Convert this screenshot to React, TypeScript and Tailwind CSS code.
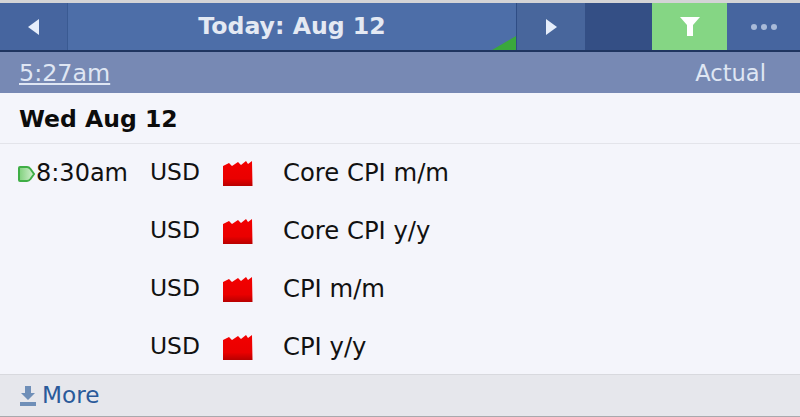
const font = { fontFamily: '"DejaVu Sans", Verdana, sans-serif' };

function Factory() {
  return (
    <svg width="30" height="26" viewBox="0 0 30 26" className="block">
      <defs>
        <linearGradient id="fac" x1="0" y1="0" x2="0" y2="1">
          <stop offset="0" stopColor="#f20000" />
          <stop offset="0.7" stopColor="#ea0000" />
          <stop offset="1" stopColor="#b80000" />
        </linearGradient>
      </defs>
      <path d="M0 6 L6 3 L9 6 L15 2 L18 5 L23 1 L25 4 L29 1 L29.5 26 L0 26 Z" fill="url(#fac)" />
    </svg>
  );
}

function Row({ time, name }: { time?: string; name: string }) {
  return (
    <div className="flex h-[58px] shrink-0 items-center text-[24px] text-[#111]">
      <div className="flex w-[150px] items-center pl-[18px]">
        {time && (
          <>
            <svg width="18" height="18" viewBox="0 0 18 18" className="mt-[2px] shrink-0">
              <defs>
                <linearGradient id="mark" x1="0" y1="0" x2="1" y2="0">
                  <stop offset="0" stopColor="#7fd07c" />
                  <stop offset="1" stopColor="#d5f0d2" />
                </linearGradient>
              </defs>
              <path d="M2 2 H9 Q11 2 12.5 4 L16 9 L12.5 14 Q11 16 9 16 H2 Q1 16 1 15 V3 Q1 2 2 2 Z" fill="url(#mark)" stroke="#3fae46" strokeWidth="2" />
            </svg>
            <span>{time}</span>
          </>
        )}
      </div>
      <div className="w-[73px] text-[23.4px]">USD</div>
      <div className="w-[60px]"><Factory /></div>
      <div className="text-[24.3px]">{name}</div>
    </div>
  );
}

export default function App() {
  return (
    <div className="flex h-[417px] w-[800px] flex-col overflow-hidden bg-[#f4f5fb]" style={font}>
      <div className="h-[3px] shrink-0 bg-[#d4d4d6]" />

      {/* nav bar */}
      <div className="flex h-[49px] shrink-0 border-b-2 border-[#1f3560] bg-[#4d6ea8]">
        <div className="flex w-[68px] items-center justify-center border-r border-[#3a5a92] bg-[#46659f]">
          <svg width="12" height="16" viewBox="0 0 12 16"><path d="M11 0 V16 L0 8 Z" fill="#e6eefb" /></svg>
        </div>
        <div className="relative flex flex-1 items-center justify-center text-[23.6px] font-bold text-[#e4e9f3]">
          Today: Aug 12
          <div className="absolute bottom-0 right-0 h-[14px] w-[24px] bg-[#3aa83c] [clip-path:polygon(100%_0,100%_100%,0_100%)]" />
        </div>
        <div className="flex w-[69px] items-center justify-center border-l border-[#2f4d85] bg-[#48669c]">
          <svg width="12" height="16" viewBox="0 0 12 16"><path d="M1 0 V16 L12 8 Z" fill="#e6eefb" /></svg>
        </div>
        <div className="w-[67px] bg-[#344f85]" />
        <div className="flex w-[75px] items-center justify-center bg-[#85d684]">
          <svg width="20" height="20" viewBox="0 0 20 20"><path d="M0 0 H20 L13 8 V19 H7 V8 Z" fill="#fff" /></svg>
        </div>
        <div className="flex w-[73px] items-center justify-center gap-[4px] bg-[#46659f]">
          <div className="h-[6px] w-[6px] rounded-full bg-[#a9bad8]" />
          <div className="h-[6px] w-[6px] rounded-full bg-[#a9bad8]" />
          <div className="h-[6px] w-[6px] rounded-full bg-[#a9bad8]" />
        </div>
      </div>

      {/* time bar */}
      <div className="flex h-[41px] shrink-0 items-center justify-between bg-[#7789b4] pl-[19px] pr-[34px] pt-[3px] text-[23.8px] text-[#dfe6f3]">
        <span className="underline underline-offset-2">5:27am</span>
        <span className="text-[22.6px]">Actual</span>
      </div>

      <div className="flex h-[51px] shrink-0 items-center border-b border-[#e3e4ea] pl-[19px] pt-[4px] text-[23.5px] font-bold text-[#0c0c0c]">
        Wed Aug 12
      </div>

      <div className="min-h-0 flex-1 overflow-hidden">
        <Row time="8:30am" name="Core CPI m/m" />
        <Row name="Core CPI y/y" />
        <Row name="CPI m/m" />
        <Row name="CPI y/y" />
      </div>

      {/* more */}
      <div className="flex h-[43px] shrink-0 items-center gap-[6px] border-y border-t-[#d8d9de] border-b-[#a9a9ad] bg-[#e6e7ec] pl-[20px] text-[23.2px] text-[#2a5a9a]">
        <svg width="16" height="20" viewBox="0 0 16 20">
          <path d="M5 0 H11 V7 H15 L8 14 L1 7 H5 Z M0 16 H16 V20 H0 Z" fill="#6f8fb8" />
        </svg>
        <span>More</span>
      </div>
    </div>
  );
}
